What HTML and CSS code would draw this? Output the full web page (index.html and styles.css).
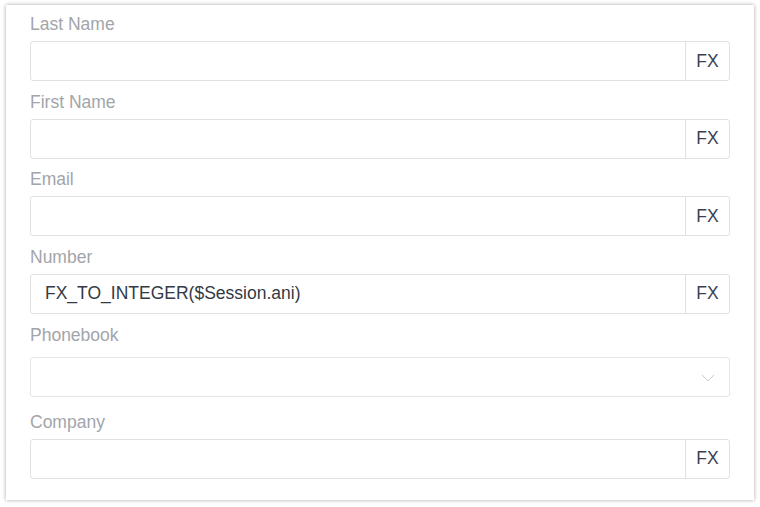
FILE: index.html
```html
<html>
    <head>
        <link rel="stylesheet" href="styles.css">
        <meta name="viewport" content="width=device-width, initial-scale=1.0">
        <title>Contact</title>
    </head>
    <body>
        <div class="card">
            <div class="field">
                <label class="fieldLabel">Last Name</label>
                <div class="inputGroup">
                    <input class="textInput" type="text" value="">
                    <span class="fxButton">FX</span>
                </div>
            </div>
            <div class="field">
                <label class="fieldLabel">First Name</label>
                <div class="inputGroup">
                    <input class="textInput" type="text" value="">
                    <span class="fxButton">FX</span>
                </div>
            </div>
            <div class="field">
                <label class="fieldLabel">Email</label>
                <div class="inputGroup">
                    <input class="textInput" type="text" value="">
                    <span class="fxButton">FX</span>
                </div>
            </div>
            <div class="field">
                <label class="fieldLabel">Number</label>
                <div class="inputGroup">
                    <input class="textInput" type="text" value="FX_TO_INTEGER($Session.ani)">
                    <span class="fxButton">FX</span>
                </div>
            </div>
            <div class="field selectField">
                <label class="fieldLabel">Phonebook</label>
                <div class="selectBox">
                    <span class="selectValue"></span>
                    <svg class="chevron" width="14" height="8" viewBox="0 0 14 8">
                        <path d="M1 1 L7 7 L13 1" fill="none" stroke="#c8cbd0" stroke-width="1"/>
                    </svg>
                </div>
            </div>
            <div class="field">
                <label class="fieldLabel">Company</label>
                <div class="inputGroup">
                    <input class="textInput" type="text" value="">
                    <span class="fxButton">FX</span>
                </div>
            </div>
        </div>
    </body>
</html>
```

FILE: styles.css
```css
html { background: #ffffff; }
body { font-family: "Liberation Sans", Arial, sans-serif; margin: 0; padding: 5px 6px 0 6px; }

.card {
    width: 748px;
    box-sizing: border-box;
    background: #ffffff;
    padding: 8px 24px 21px 24px;
    box-shadow: 0 0 4px rgba(0, 0, 0, 0.35);
}

.field { margin-bottom: 9.67px; }
.field:last-child { margin-bottom: 0; }
.selectField { margin-bottom: 14px; }
.selectField .fieldLabel { margin-bottom: 11px; }

.fieldLabel {
    display: block;
    font-size: 17.5px;
    line-height: 22px;
    color: #a2a5aa;
    margin-bottom: 6px;
}

.inputGroup {
    display: flex;
    height: 40px;
    border: 1px solid #dfe1e5;
    border-radius: 3px;
    box-sizing: border-box;
}

.textInput {
    flex: 1;
    border: none;
    outline: none;
    padding: 0 14px;
    font-family: "Liberation Sans", Arial, sans-serif;
    font-size: 17.5px;
    color: #333a44;
    background: transparent;
    min-width: 0;
}

.fxButton {
    width: 43px;
    border-left: 1px solid #dfe1e5;
    display: flex;
    align-items: center;
    justify-content: center;
    font-size: 17.5px;
    color: #3a4250;
}

.selectBox {
    display: flex;
    align-items: center;
    justify-content: space-between;
    height: 40px;
    border: 1px solid #e4e6ea;
    border-radius: 3px;
    box-sizing: border-box;
    padding: 0 14px;
}

.chevron { margin-top: 2px; }
```
